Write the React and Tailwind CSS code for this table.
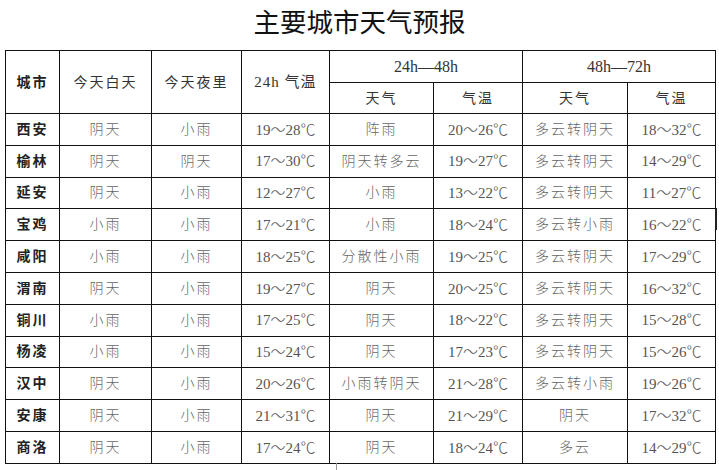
import React from "react";

const rows = [
  ["西安", "阴天", "小雨", "19～28℃", "阵雨", "20～26℃", "多云转阴天", "18～32℃"],
  ["榆林", "阴天", "阴天", "17～30℃", "阴天转多云", "19～27℃", "多云转阴天", "14～29℃"],
  ["延安", "阴天", "小雨", "12～27℃", "小雨", "13～22℃", "多云转阴天", "11～27℃"],
  ["宝鸡", "小雨", "小雨", "17～21℃", "小雨", "18～24℃", "多云转小雨", "16～22℃"],
  ["咸阳", "小雨", "小雨", "18～25℃", "分散性小雨", "19～25℃", "多云转阴天", "17～29℃"],
  ["渭南", "阴天", "小雨", "19～27℃", "阴天", "20～25℃", "多云转阴天", "16～32℃"],
  ["铜川", "小雨", "小雨", "17～25℃", "阴天", "18～22℃", "多云转阴天", "15～28℃"],
  ["杨凌", "小雨", "小雨", "15～24℃", "阴天", "17～23℃", "多云转阴天", "15～26℃"],
  ["汉中", "阴天", "小雨", "20～26℃", "小雨转阴天", "21～28℃", "多云转小雨", "19～26℃"],
  ["安康", "阴天", "小雨", "21～31℃", "阴天", "21～29℃", "阴天", "17～32℃"],
  ["商洛", "阴天", "小雨", "17～24℃", "阴天", "18～24℃", "多云", "14～29℃"],
];

const serif = "font-['Liberation_Serif','Noto_Sans_CJK_SC',serif]";

function Temp({ v }) {
  const [a, rest] = v.split("～");
  const b = rest.replace("℃", "");
  return (
    <span>
      {a}
      <span className="font-['Noto_Sans_CJK_SC',sans-serif] font-light inline-block w-[15px] text-center">～</span>
      {b}
      <span className="font-['Noto_Sans_CJK_SC',sans-serif] font-light">℃</span>
    </span>
  );
}

export default function App() {
  return (
    <div className="w-[719px] h-[470px] bg-white relative overflow-hidden">
      <div className="h-[50px] flex justify-center">
        <h1 className="text-[26.5px] leading-[42px] font-normal text-[#111] font-['Noto_Sans_CJK_SC',sans-serif]">
          主要城市天气预报
        </h1>
      </div>
      <div className="pl-[5px]">
        <table className={`border-collapse table-fixed w-[710px] ${serif}`}>
          <colgroup>
            <col className="w-[54px]" />
            <col className="w-[92px]" />
            <col className="w-[90px]" />
            <col className="w-[88px]" />
            <col className="w-[104px]" />
            <col className="w-[89px]" />
            <col className="w-[105px]" />
            <col className="w-[88px]" />
          </colgroup>
          <thead>
            <tr className="h-[32px]">
              <th rowSpan={2} className="border border-[#111] text-[14px] tracking-[2px] font-bold text-[#222] p-0">城市</th>
              <th rowSpan={2} className="border border-[#111] text-[14px] tracking-[2px] font-normal text-[#333] p-0">今天白天</th>
              <th rowSpan={2} className="border border-[#111] text-[14px] tracking-[2px] font-normal text-[#333] p-0">今天夜里</th>
              <th rowSpan={2} className="border border-[#111] text-[15px] tracking-[1px] font-normal text-[#333] p-0">24h 气温</th>
              <th colSpan={2} className="border border-[#111] text-[16px] font-normal text-[#333] p-0">24h—48h</th>
              <th colSpan={2} className="border border-[#111] text-[16px] font-normal text-[#333] p-0">48h—72h</th>
            </tr>
            <tr className="h-[31px]">
              <th className="border border-[#111] text-[14px] tracking-[2px] font-normal text-[#333] p-0">天气</th>
              <th className="border border-[#111] text-[14px] tracking-[2px] font-normal text-[#333] p-0">气温</th>
              <th className="border border-[#111] text-[14px] tracking-[2px] font-normal text-[#333] p-0">天气</th>
              <th className="border border-[#111] text-[14px] tracking-[2px] font-normal text-[#333] p-0">气温</th>
            </tr>
          </thead>
          <tbody>
            {rows.map((r) => (
              <tr key={r[0]} className="h-[31.8px]">
                {r.map((c, i) => {
                  const isNum = i === 3 || i === 5 || i === 7;
                  const cls =
                    i === 0
                      ? "text-[14px] tracking-[2px] font-bold text-[#222]"
                      : isNum
                      ? "text-[15px] text-[#555]"
                      : "text-[14px] tracking-[2px] font-light text-[#666]";
                  return (
                    <td
                      key={i}
                      className={`border border-[#111] text-center p-0 whitespace-nowrap ${cls}`}
                    >
                      {isNum ? <Temp v={c} /> : c}
                    </td>
                  );
                })}
              </tr>
            ))}
          </tbody>
        </table>
      </div>
      <div className="absolute left-[715px] top-[208px] w-[2px] h-[22px] bg-[#222]" />
      <div className="absolute left-[336px] top-[463px] w-[1px] h-[7px] bg-[#999]" />
    </div>
  );
}
